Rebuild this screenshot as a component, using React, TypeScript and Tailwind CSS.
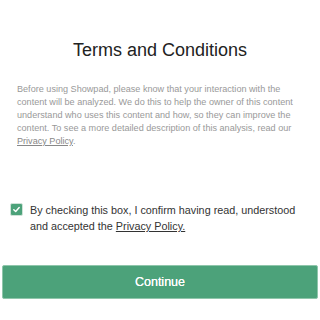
import { useState } from "react";

export default function App() {
  const [agreed, setAgreed] = useState(true);

  return (
    <div
      className="w-[320px] h-[320px] bg-white flex flex-col overflow-hidden"
      style={{ fontFamily: '"Liberation Sans", Arial, sans-serif' }}
    >
      <h1 className="mt-[39px] text-center text-[18px] leading-[22px] text-[#222]">
        Terms and Conditions
      </h1>

      <p className="mt-[22px] pl-[17px] pr-[24px] text-[9.1px] leading-[13px] text-[#999]">
        Before using Showpad, please know that your interaction with the content will be
        analyzed. We do this to help the owner of this content understand who uses this content
        and how, so they can improve the content. To see a more detailed description of this
        analysis, read our <a className="underline text-[#888]">Privacy Policy</a>.
      </p>

      <label className="mt-[54px] ml-[10px] mr-[10px] flex items-start gap-[7px] cursor-pointer">
        <span
          onClick={() => setAgreed(!agreed)}
          className={`mt-[1px] w-[13px] h-[13px] shrink-0 rounded-[2px] flex items-center justify-center border border-[#cfe3d8] ${
            agreed ? "bg-[#4ca27a]" : "bg-white"
          }`}
        >
          {agreed && (
            <svg width="9" height="9" viewBox="0 0 10 10" fill="none">
              <path d="M2 5.2 L4.1 7.2 L8 2.8" stroke="white" strokeWidth="1.6" strokeLinecap="round" strokeLinejoin="round" />
            </svg>
          )}
        </span>
        <span className="text-[10.8px] leading-[16px] text-[#333]">
          By checking this box, I confirm having read, understood and accepted the{" "}
          <a className="underline">Privacy Policy.</a>
        </span>
      </label>

      <button className="mt-[31px] mx-[2px] h-[34px] rounded-[2px] bg-[#4ca27a] border border-[#8fc6ab] text-white text-[12.5px] font-medium [text-shadow:0_0_0.4px_white]">
        Continue
      </button>
    </div>
  );
}
